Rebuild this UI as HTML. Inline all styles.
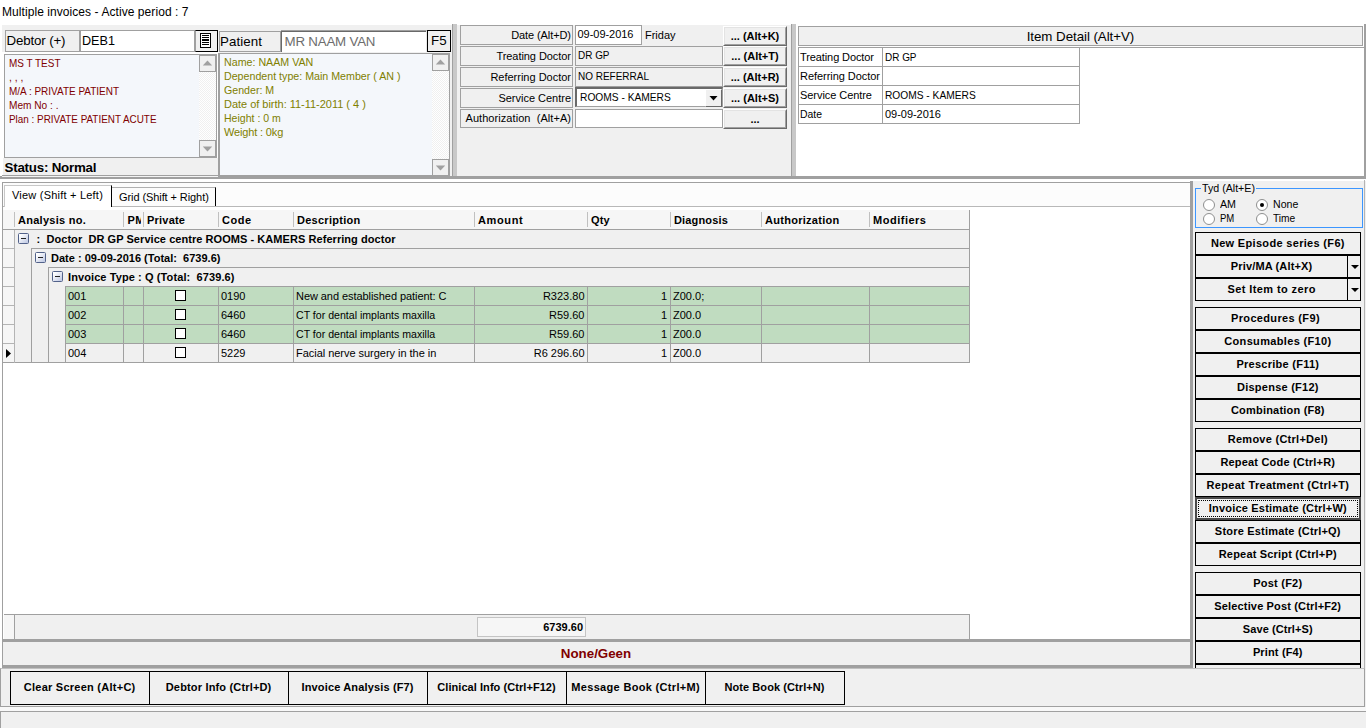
<!DOCTYPE html>
<html><head><meta charset="utf-8"><title>Multiple invoices</title><style>
html,body{margin:0;padding:0}
body{width:1366px;height:728px;position:relative;overflow:hidden;background:#fff;font-family:"Liberation Sans",Arial,sans-serif;font-size:11px;color:#000}
div,span.t,svg{position:absolute;box-sizing:border-box}
span.t{white-space:pre}
</style></head><body>
<div style="left:0px;top:25px;width:1366px;height:703px;background:#f0f0f0;"></div>
<div style="left:0px;top:25px;width:2px;height:154px;background:#fff;"></div>
<span id="t0" class="t" style="top:5px;line-height:14px;font-size:12px;color:#000;letter-spacing:0.067px;left:2px;">Multiple invoices - Active period : 7</span>
<div style="left:2px;top:52px;width:217px;height:126px;background:#fff;"></div>
<div style="left:217px;top:52px;width:2px;height:127px;background:#fff;"></div>
<div style="left:5px;top:30px;width:75px;height:22px;background:#f0f0f0;border:1px solid #a0a0a0;"></div>
<span id="t1" class="t" style="top:33px;line-height:15px;font-size:13.33px;color:#000;letter-spacing:-0.153px;left:6.5px;">Debtor (+)</span>
<div style="left:80px;top:30px;width:115px;height:22px;background:#fff;border:1px solid #a0a0a0;"></div>
<span id="t2" class="t" style="top:33px;line-height:15px;font-size:13.33px;color:#000;transform:scaleX(0.9475);transform-origin:left center;left:82px;">DEB1</span>
<div style="left:195px;top:30px;width:23px;height:22px;background:#f0f0f0;border:1px solid #000;border-left-color:#a0a0a0;"></div>
<div style="left:200px;top:33px;width:11px;height:15px;background:#fff;border:1px solid #000;"><div style="left:1px;top:1px;width:7px;height:1px;background:#000"></div><div style="left:1px;top:3px;width:7px;height:1px;background:#000"></div><div style="left:1px;top:5px;width:7px;height:2px;background:#000"></div><div style="left:1px;top:8px;width:7px;height:1px;background:#000"></div><div style="left:1px;top:10px;width:7px;height:1px;background:#000"></div></div>
<div style="left:4px;top:54px;width:213px;height:104px;background:#f4f7fb;border:1px solid #a0a0a0;"></div>
<span id="t3" class="t" style="top:57px;line-height:12px;font-size:11px;color:#800000;transform:scaleX(0.9057);transform-origin:left center;left:9px;">MS T TEST</span>
<span id="t4" class="t" style="top:71px;line-height:12px;font-size:11px;color:#800000;transform:scaleX(0.9489);transform-origin:left center;left:9px;">, , ,</span>
<span id="t5" class="t" style="top:85px;line-height:12px;font-size:11px;color:#800000;transform:scaleX(0.9058);transform-origin:left center;left:9px;">M/A : PRIVATE PATIENT</span>
<span id="t6" class="t" style="top:99px;line-height:12px;font-size:11px;color:#800000;transform:scaleX(0.9201);transform-origin:left center;left:9px;">Mem No : .</span>
<span id="t7" class="t" style="top:113px;line-height:12px;font-size:11px;color:#800000;transform:scaleX(0.8992);transform-origin:left center;left:9px;">Plan : PRIVATE PATIENT ACUTE</span>
<div style="left:199px;top:55px;width:17px;height:102px;background:repeating-conic-gradient(#fff 0 25%,#f0f0f0 0 50%) 0 0/2px 2px;"></div>
<div style="left:199px;top:55px;width:17px;height:17px;background:#f0f0f0;border:1px solid #a0a0a0;"><svg width="17" height="17" style="left:-1px;top:-1px"><polygon points="3.8,10.6 8.5,5.6 13.2,10.6" fill="#a0a0a0"/></svg></div>
<div style="left:199px;top:140px;width:17px;height:17px;background:#f0f0f0;border:1px solid #a0a0a0;"><svg width="17" height="17" style="left:-1px;top:-1px"><polygon points="3.8,6.4 13.2,6.4 8.5,11.4" fill="#a0a0a0"/></svg></div>
<div style="left:3px;top:158px;width:215px;height:17px;background:#f0f0f0;"></div>
<div style="left:2px;top:175px;width:217px;height:1px;background:#a0a0a0;"></div>
<div style="left:218px;top:158px;width:1px;height:18px;background:#a0a0a0;"></div>
<span id="t8" class="t" style="top:160px;line-height:15px;font-size:13.33px;color:#000;font-weight:bold;letter-spacing:-0.215px;left:4.5px;">Status: Normal</span>
<div style="left:219px;top:31px;width:62px;height:21px;background:#f0f0f0;border:1px solid #a0a0a0;"></div>
<span id="t9" class="t" style="top:34px;line-height:15px;font-size:13.33px;color:#000;letter-spacing:0.083px;left:220px;">Patient</span>
<div style="left:281px;top:30px;width:146px;height:22px;background:#fff;border-top:1px solid #a0a0a0;border-right:1px solid #e8e8e8;"><div style="left:0;top:0;right:0;bottom:0;border-top:1px solid #696969;border-left:1px solid #696969"></div></div>
<span id="t10" class="t" style="top:34px;line-height:15px;font-size:13.33px;color:#6d6d6d;letter-spacing:-0.206px;left:284.5px;">MR NAAM VAN</span>
<div style="left:427px;top:30px;width:24px;height:22px;background:#f0f0f0;border:1px solid #000;"></div>
<span id="t11" class="t" style="top:33px;line-height:15px;font-size:13.33px;color:#000;left:431px;">F5</span>
<div style="left:218px;top:53px;width:232px;height:123px;background:#f4f7fb;border:1px solid #a0a0a0;border-left-width:2px;"></div>
<span id="t12" class="t" style="top:56px;line-height:12px;font-size:11px;color:#808000;transform:scaleX(0.9697);transform-origin:left center;left:224px;">Name: NAAM VAN</span>
<span id="t13" class="t" style="top:70px;line-height:12px;font-size:11px;color:#808000;transform:scaleX(0.9687);transform-origin:left center;left:224px;">Dependent type: Main Member ( AN )</span>
<span id="t14" class="t" style="top:84px;line-height:12px;font-size:11px;color:#808000;transform:scaleX(0.9660);transform-origin:left center;left:224px;">Gender: M</span>
<span id="t15" class="t" style="top:98px;line-height:12px;font-size:11px;color:#808000;letter-spacing:-0.022px;left:224px;">Date of birth: 11-11-2011 ( 4 )</span>
<span id="t16" class="t" style="top:112px;line-height:12px;font-size:11px;color:#808000;transform:scaleX(0.9576);transform-origin:left center;left:224px;">Height : 0 m</span>
<span id="t17" class="t" style="top:126px;line-height:12px;font-size:11px;color:#808000;letter-spacing:-0.150px;left:224px;">Weight : 0kg</span>
<div style="left:432px;top:54px;width:17px;height:122px;background:repeating-conic-gradient(#fff 0 25%,#f0f0f0 0 50%) 0 0/2px 2px;"></div>
<div style="left:432px;top:54px;width:17px;height:17px;background:#f0f0f0;border:1px solid #a0a0a0;"><svg width="17" height="17" style="left:-1px;top:-1px"><polygon points="3.8,10.6 8.5,5.6 13.2,10.6" fill="#a0a0a0"/></svg></div>
<div style="left:432px;top:159px;width:17px;height:17px;background:#f0f0f0;border:1px solid #a0a0a0;"><svg width="17" height="17" style="left:-1px;top:-1px"><polygon points="3.8,6.4 13.2,6.4 8.5,11.4" fill="#a0a0a0"/></svg></div>
<div style="left:452px;top:24px;width:1px;height:154px;background:#a0a0a0;"></div>
<div style="left:453px;top:24px;width:4px;height:154px;background:#c8c8c8;"></div>
<div style="left:791px;top:24px;width:1px;height:154px;background:#a0a0a0;"></div>
<div style="left:792px;top:24px;width:4px;height:154px;background:#c8c8c8;"></div>
<div style="left:460px;top:25px;width:113px;height:20px;background:#f0f0f0;border:1px solid #a0a0a0;"></div>
<span id="t18" class="t" style="top:29px;line-height:12px;font-size:11px;color:#000;letter-spacing:-0.093px;right:795.09px;">Date (Alt+D)</span>
<div style="left:723px;top:26px;width:64px;height:20px;background:#f0f0f0;border-top:1px solid #fff;border-left:1px solid #fff;border-right:1px solid #696969;border-bottom:1px solid #696969;"><div style="left:0;top:0;right:0;bottom:0;border-right:1px solid #a0a0a0;border-bottom:1px solid #a0a0a0;border-top:1px solid #e3e3e3;border-left:1px solid #e3e3e3"></div></div>
<span id="t19" class="t" style="top:30px;line-height:12px;font-size:11px;color:#000;font-weight:bold;left:455.00px;width:600px;text-align:center;">... (Alt+K)</span>
<div style="left:460px;top:46px;width:113px;height:20px;background:#f0f0f0;border:1px solid #a0a0a0;"></div>
<span id="t20" class="t" style="top:50px;line-height:12px;font-size:11px;color:#000;letter-spacing:-0.058px;right:795.06px;">Treating Doctor</span>
<div style="left:723px;top:46px;width:64px;height:20px;background:#f0f0f0;border-top:1px solid #fff;border-left:1px solid #fff;border-right:1px solid #696969;border-bottom:1px solid #696969;"><div style="left:0;top:0;right:0;bottom:0;border-right:1px solid #a0a0a0;border-bottom:1px solid #a0a0a0;border-top:1px solid #e3e3e3;border-left:1px solid #e3e3e3"></div></div>
<span id="t21" class="t" style="top:50px;line-height:12px;font-size:11px;color:#000;font-weight:bold;left:455.00px;width:600px;text-align:center;">... (Alt+T)</span>
<div style="left:460px;top:67px;width:113px;height:20px;background:#f0f0f0;border:1px solid #a0a0a0;"></div>
<span id="t22" class="t" style="top:71px;line-height:12px;font-size:11px;color:#000;letter-spacing:-0.007px;right:795.01px;">Referring Doctor</span>
<div style="left:723px;top:67px;width:64px;height:20px;background:#f0f0f0;border-top:1px solid #fff;border-left:1px solid #fff;border-right:1px solid #696969;border-bottom:1px solid #696969;"><div style="left:0;top:0;right:0;bottom:0;border-right:1px solid #a0a0a0;border-bottom:1px solid #a0a0a0;border-top:1px solid #e3e3e3;border-left:1px solid #e3e3e3"></div></div>
<span id="t23" class="t" style="top:71px;line-height:12px;font-size:11px;color:#000;font-weight:bold;left:455.00px;width:600px;text-align:center;">... (Alt+R)</span>
<div style="left:460px;top:88px;width:113px;height:20px;background:#f0f0f0;border:1px solid #a0a0a0;"></div>
<span id="t24" class="t" style="top:92px;line-height:12px;font-size:11px;color:#000;letter-spacing:-0.013px;right:795.01px;">Service Centre</span>
<div style="left:723px;top:88px;width:64px;height:20px;background:#f0f0f0;border-top:1px solid #fff;border-left:1px solid #fff;border-right:1px solid #696969;border-bottom:1px solid #696969;"><div style="left:0;top:0;right:0;bottom:0;border-right:1px solid #a0a0a0;border-bottom:1px solid #a0a0a0;border-top:1px solid #e3e3e3;border-left:1px solid #e3e3e3"></div></div>
<span id="t25" class="t" style="top:92px;line-height:12px;font-size:11px;color:#000;font-weight:bold;left:455.00px;width:600px;text-align:center;">... (Alt+S)</span>
<div style="left:460px;top:109px;width:113px;height:19px;background:#f0f0f0;border:1px solid #a0a0a0;"></div>
<span id="t26" class="t" style="top:112px;line-height:12px;font-size:11px;color:#000;letter-spacing:0.060px;right:794.94px;">Authorization  (Alt+A)</span>
<div style="left:723px;top:109px;width:64px;height:20px;background:#f0f0f0;border-top:1px solid #fff;border-left:1px solid #fff;border-right:1px solid #696969;border-bottom:1px solid #696969;"><div style="left:0;top:0;right:0;bottom:0;border-right:1px solid #a0a0a0;border-bottom:1px solid #a0a0a0;border-top:1px solid #e3e3e3;border-left:1px solid #e3e3e3"></div></div>
<span id="t27" class="t" style="top:113px;line-height:12px;font-size:11px;color:#000;font-weight:bold;left:455.00px;width:600px;text-align:center;">...</span>
<div style="left:575px;top:25px;width:67px;height:20px;background:#fff;border:1px solid #a0a0a0;"></div>
<span id="t28" class="t" style="top:28px;line-height:12px;font-size:11px;color:#000;letter-spacing:-0.031px;left:577.5px;">09-09-2016</span>
<span id="t29" class="t" style="top:29px;line-height:12px;font-size:11px;color:#000;letter-spacing:-0.013px;left:645px;">Friday</span>
<div style="left:575px;top:46px;width:148px;height:20px;background:#f0f0f0;border:1px solid #a0a0a0;"></div>
<span id="t30" class="t" style="top:49px;line-height:12px;font-size:11px;color:#000;transform:scaleX(0.9040);transform-origin:left center;left:577.5px;">DR GP</span>
<div style="left:575px;top:67px;width:148px;height:20px;background:#f0f0f0;border:1px solid #a0a0a0;"></div>
<span id="t31" class="t" style="top:70px;line-height:12px;font-size:11px;color:#000;transform:scaleX(0.9073);transform-origin:left center;left:577.5px;">NO REFERRAL</span>
<div style="left:575px;top:87px;width:148px;height:20px;background:#fff;border:1px solid #a0a0a0;border-left:2px solid #696969;border-top:2px solid #696969;"></div>
<span id="t32" class="t" style="top:91px;line-height:12px;font-size:11px;color:#000;transform:scaleX(0.9285);transform-origin:left center;left:579.5px;">ROOMS - KAMERS</span>
<div style="left:705px;top:89px;width:17px;height:18px;background:#f0f0f0;border-top:1px solid #fff;border-left:1px solid #fff;border-right:1px solid #696969;border-bottom:1px solid #696969;"><svg width="17" height="18" style="left:-1px;top:-1px"><polygon points="4.5,7 12.5,7 8.5,11.5" fill="#000"/></svg></div>
<div style="left:575px;top:109px;width:148px;height:19px;background:#fff;border:1px solid #a0a0a0;"></div>
<div style="left:796px;top:25px;width:570px;height:151px;background:#fff;"></div>
<div style="left:798px;top:26px;width:565px;height:20px;background:#f0f0f0;border:1px solid #a0a0a0;"></div>
<div style="left:798px;top:47px;width:566px;height:1px;background:#a0a0a0;"></div>
<div style="left:1364px;top:24px;width:2px;height:155px;background:#a0a0a0;"></div>
<span id="t33" class="t" style="top:29px;line-height:15px;font-size:13.33px;color:#000;letter-spacing:-0.051px;left:780.47px;width:600px;text-align:center;">Item Detail (Alt+V)</span>
<div style="left:798px;top:47px;width:282px;height:77px;background:#fff;border:1px solid #a0a0a0;"></div>
<div style="left:882px;top:47px;width:1px;height:77px;background:#a0a0a0;"></div>
<span id="t34" class="t" style="top:51px;line-height:12px;font-size:11px;color:#000;letter-spacing:-0.100px;left:800px;">Treating Doctor</span>
<span id="t35" class="t" style="top:51px;line-height:12px;font-size:11px;color:#000;transform:scaleX(0.9040);transform-origin:left center;left:885px;">DR GP</span>
<div style="left:798px;top:66px;width:282px;height:1px;background:#a0a0a0;"></div>
<span id="t36" class="t" style="top:70px;line-height:12px;font-size:11px;color:#000;letter-spacing:-0.047px;left:800px;">Referring Doctor</span>
<div style="left:798px;top:85px;width:282px;height:1px;background:#a0a0a0;"></div>
<span id="t37" class="t" style="top:89px;line-height:12px;font-size:11px;color:#000;letter-spacing:-0.059px;left:800px;">Service Centre</span>
<span id="t38" class="t" style="top:89px;line-height:12px;font-size:11px;color:#000;transform:scaleX(0.9274);transform-origin:left center;left:885px;">ROOMS - KAMERS</span>
<div style="left:798px;top:104px;width:282px;height:1px;background:#a0a0a0;"></div>
<span id="t39" class="t" style="top:108px;line-height:12px;font-size:11px;color:#000;transform:scaleX(0.9462);transform-origin:left center;left:800px;">Date</span>
<span id="t40" class="t" style="top:108px;line-height:12px;font-size:11px;color:#000;letter-spacing:-0.031px;left:885px;">09-09-2016</span>
<div style="left:0px;top:176px;width:1364px;height:3px;background:#a0a0a0;"></div>
<div style="left:2px;top:176px;width:216px;height:1px;background:#f4f4f4;"></div>
<div style="left:0px;top:179px;width:1366px;height:3px;background:#fff;"></div>
<div style="left:2px;top:182px;width:1189px;height:457px;background:#fff;border-left:1px solid #a0a0a0;border-top:1px solid #a0a0a0;border-right:1px solid #a0a0a0;"></div>
<div style="left:3px;top:183px;width:1187px;height:23px;background:#fcfcfc;"></div>
<div style="left:3px;top:206px;width:1187px;height:1px;background:#b8b8b8;"></div>
<div style="left:4px;top:185px;width:108px;height:22px;background:#fff;border-right:1px solid #000;border-left:1px solid #c8c8c8;border-top:1px solid #c8c8c8;"></div>
<span id="t41" class="t" style="top:189px;line-height:12px;font-size:11px;color:#000;letter-spacing:0.215px;left:12px;">View (Shift + Left)</span>
<div style="left:112px;top:187px;width:104px;height:19px;background:#fcfcfc;border-right:1px solid #000;border-top:1px solid #b0b0b0;"></div>
<span id="t42" class="t" style="top:191px;line-height:12px;font-size:11px;color:#000;letter-spacing:-0.084px;left:119px;">Grid (Shift + Right)</span>
<div style="left:3px;top:210px;width:967px;height:19px;background:#f6f6f6;"></div>
<div style="left:14px;top:212px;width:1px;height:15px;background:#c0c0c0;"></div>
<span id="t43" class="t" style="top:214px;line-height:12px;font-size:11px;color:#000;font-weight:bold;letter-spacing:0.264px;left:18px;">Analysis no.</span>
<div style="left:123px;top:212px;width:1px;height:15px;background:#c0c0c0;"></div>
<div style="left:124px;top:212px;width:17px;height:16px;overflow:hidden;"><span class="t" style="left:3.5px;top:2px;line-height:12px;font-size:11px;font-weight:bold;letter-spacing:0.3px">PM</span></div>
<div style="left:143px;top:212px;width:1px;height:15px;background:#c0c0c0;"></div>
<span id="t44" class="t" style="top:214px;line-height:12px;font-size:11px;color:#000;font-weight:bold;letter-spacing:0.216px;left:147px;">Private</span>
<div style="left:218px;top:212px;width:1px;height:15px;background:#c0c0c0;"></div>
<span id="t45" class="t" style="top:214px;line-height:12px;font-size:11px;color:#000;font-weight:bold;letter-spacing:0.500px;left:222px;">Code</span>
<div style="left:293px;top:212px;width:1px;height:15px;background:#c0c0c0;"></div>
<span id="t46" class="t" style="top:214px;line-height:12px;font-size:11px;color:#000;font-weight:bold;letter-spacing:0.268px;left:297px;">Description</span>
<div style="left:474px;top:212px;width:1px;height:15px;background:#c0c0c0;"></div>
<span id="t47" class="t" style="top:214px;line-height:12px;font-size:11px;color:#000;font-weight:bold;letter-spacing:0.631px;left:478px;">Amount</span>
<div style="left:587px;top:212px;width:1px;height:15px;background:#c0c0c0;"></div>
<span id="t48" class="t" style="top:214px;line-height:12px;font-size:11px;color:#000;font-weight:bold;letter-spacing:0.078px;left:591px;">Qty</span>
<div style="left:670px;top:212px;width:1px;height:15px;background:#c0c0c0;"></div>
<span id="t49" class="t" style="top:214px;line-height:12px;font-size:11px;color:#000;font-weight:bold;letter-spacing:0.153px;left:674px;">Diagnosis</span>
<div style="left:761px;top:212px;width:1px;height:15px;background:#c0c0c0;"></div>
<span id="t50" class="t" style="top:214px;line-height:12px;font-size:11px;color:#000;font-weight:bold;letter-spacing:0.284px;left:765px;">Authorization</span>
<div style="left:869px;top:212px;width:1px;height:15px;background:#c0c0c0;"></div>
<span id="t51" class="t" style="top:214px;line-height:12px;font-size:11px;color:#000;font-weight:bold;letter-spacing:0.512px;left:873px;">Modifiers</span>
<div style="left:3px;top:230px;width:967px;height:133px;background:#f0f0f0;"></div>
<div style="left:3px;top:230px;width:11px;height:132px;background:#f6f6f6;"></div>
<div style="left:3px;top:229px;width:967px;height:1px;background:#a0a0a0;"></div>
<div style="left:3px;top:229px;width:11px;height:1px;background:#a0a0a0;"></div>
<div style="left:31px;top:248px;width:939px;height:1px;background:#a0a0a0;"></div>
<div style="left:3px;top:248px;width:11px;height:1px;background:#b4b4b4;"></div>
<div style="left:48px;top:267px;width:922px;height:1px;background:#a0a0a0;"></div>
<div style="left:3px;top:267px;width:11px;height:1px;background:#b4b4b4;"></div>
<div style="left:65px;top:286px;width:905px;height:1px;background:#a0a0a0;"></div>
<div style="left:3px;top:286px;width:11px;height:1px;background:#b4b4b4;"></div>
<div style="left:65px;top:305px;width:905px;height:1px;background:#a0a0a0;"></div>
<div style="left:3px;top:305px;width:11px;height:1px;background:#b4b4b4;"></div>
<div style="left:65px;top:324px;width:905px;height:1px;background:#a0a0a0;"></div>
<div style="left:3px;top:324px;width:11px;height:1px;background:#b4b4b4;"></div>
<div style="left:65px;top:343px;width:905px;height:1px;background:#a0a0a0;"></div>
<div style="left:3px;top:343px;width:11px;height:1px;background:#b4b4b4;"></div>
<div style="left:3px;top:362px;width:967px;height:1px;background:#a0a0a0;"></div>
<div style="left:3px;top:362px;width:11px;height:1px;background:#a0a0a0;"></div>
<div style="left:969px;top:210px;width:1px;height:153px;background:#a0a0a0;"></div>
<div style="left:14px;top:230px;width:1px;height:133px;background:#b4b4b4;"></div>
<div style="left:31px;top:248px;width:1px;height:114px;background:#a0a0a0;"></div>
<div style="left:48px;top:267px;width:1px;height:95px;background:#a0a0a0;"></div>
<div style="left:65px;top:286px;width:1px;height:76px;background:#a0a0a0;"></div>
<div style="left:66px;top:287px;width:903px;height:18px;background:#c0dcc0;"></div>
<div style="left:66px;top:306px;width:903px;height:18px;background:#c0dcc0;"></div>
<div style="left:66px;top:325px;width:903px;height:18px;background:#c0dcc0;"></div>
<div style="left:18px;top:233px;width:11px;height:11px;background:linear-gradient(135deg,#fff 15%,#bcc6e2 100%);border:1px solid #52628a;border-radius:1.5px;"><div style="left:2px;top:4px;width:5px;height:1px;background:#222"></div></div>
<div style="left:35px;top:252px;width:11px;height:11px;background:linear-gradient(135deg,#fff 15%,#bcc6e2 100%);border:1px solid #52628a;border-radius:1.5px;"><div style="left:2px;top:4px;width:5px;height:1px;background:#222"></div></div>
<div style="left:52px;top:271px;width:11px;height:11px;background:linear-gradient(135deg,#fff 15%,#bcc6e2 100%);border:1px solid #52628a;border-radius:1.5px;"><div style="left:2px;top:4px;width:5px;height:1px;background:#222"></div></div>
<span id="t52" class="t" style="top:233px;line-height:12px;font-size:11px;color:#000;font-weight:bold;letter-spacing:0.056px;left:36.5px;">:  Doctor  DR GP Service centre ROOMS - KAMERS Referring doctor</span>
<span id="t53" class="t" style="top:252px;line-height:12px;font-size:11px;color:#000;font-weight:bold;letter-spacing:0.010px;left:51px;">Date : 09-09-2016 (Total:  6739.6)</span>
<span id="t54" class="t" style="top:271px;line-height:12px;font-size:11px;color:#000;font-weight:bold;letter-spacing:0.096px;left:68px;">Invoice Type : Q (Total:  6739.6)</span>
<div style="left:123px;top:286px;width:1px;height:19px;background:#a0a0a0;"></div>
<div style="left:143px;top:286px;width:1px;height:19px;background:#a0a0a0;"></div>
<div style="left:218px;top:286px;width:1px;height:19px;background:#a0a0a0;"></div>
<div style="left:293px;top:286px;width:1px;height:19px;background:#a0a0a0;"></div>
<div style="left:474px;top:286px;width:1px;height:19px;background:#a0a0a0;"></div>
<div style="left:587px;top:286px;width:1px;height:19px;background:#a0a0a0;"></div>
<div style="left:670px;top:286px;width:1px;height:19px;background:#a0a0a0;"></div>
<div style="left:761px;top:286px;width:1px;height:19px;background:#a0a0a0;"></div>
<div style="left:869px;top:286px;width:1px;height:19px;background:#a0a0a0;"></div>
<span id="t55" class="t" style="top:290px;line-height:12px;font-size:11px;color:#000;left:68px;">001</span>
<span id="t56" class="t" style="top:290px;line-height:12px;font-size:11px;color:#000;left:221px;">0190</span>
<span id="t57" class="t" style="top:290px;line-height:12px;font-size:11px;color:#000;letter-spacing:-0.061px;left:296px;">New and established patient: C</span>
<span id="t58" class="t" style="top:290px;line-height:12px;font-size:11px;color:#000;right:781.50px;">R323.80</span>
<span id="t59" class="t" style="top:290px;line-height:12px;font-size:11px;color:#000;right:699.00px;">1</span>
<span id="t60" class="t" style="top:290px;line-height:12px;font-size:11px;color:#000;left:673px;">Z00.0;</span>
<div style="left:175px;top:290px;width:11px;height:11px;background:#fff;border:1px solid #000;"></div>
<div style="left:123px;top:305px;width:1px;height:19px;background:#a0a0a0;"></div>
<div style="left:143px;top:305px;width:1px;height:19px;background:#a0a0a0;"></div>
<div style="left:218px;top:305px;width:1px;height:19px;background:#a0a0a0;"></div>
<div style="left:293px;top:305px;width:1px;height:19px;background:#a0a0a0;"></div>
<div style="left:474px;top:305px;width:1px;height:19px;background:#a0a0a0;"></div>
<div style="left:587px;top:305px;width:1px;height:19px;background:#a0a0a0;"></div>
<div style="left:670px;top:305px;width:1px;height:19px;background:#a0a0a0;"></div>
<div style="left:761px;top:305px;width:1px;height:19px;background:#a0a0a0;"></div>
<div style="left:869px;top:305px;width:1px;height:19px;background:#a0a0a0;"></div>
<span id="t61" class="t" style="top:309px;line-height:12px;font-size:11px;color:#000;left:68px;">002</span>
<span id="t62" class="t" style="top:309px;line-height:12px;font-size:11px;color:#000;left:221px;">6460</span>
<span id="t63" class="t" style="top:309px;line-height:12px;font-size:11px;color:#000;transform:scaleX(0.9621);transform-origin:left center;left:296px;">CT for dental implants maxilla</span>
<span id="t64" class="t" style="top:309px;line-height:12px;font-size:11px;color:#000;right:781.50px;">R59.60</span>
<span id="t65" class="t" style="top:309px;line-height:12px;font-size:11px;color:#000;right:699.00px;">1</span>
<span id="t66" class="t" style="top:309px;line-height:12px;font-size:11px;color:#000;left:673px;">Z00.0</span>
<div style="left:175px;top:309px;width:11px;height:11px;background:#fff;border:1px solid #000;"></div>
<div style="left:123px;top:324px;width:1px;height:19px;background:#a0a0a0;"></div>
<div style="left:143px;top:324px;width:1px;height:19px;background:#a0a0a0;"></div>
<div style="left:218px;top:324px;width:1px;height:19px;background:#a0a0a0;"></div>
<div style="left:293px;top:324px;width:1px;height:19px;background:#a0a0a0;"></div>
<div style="left:474px;top:324px;width:1px;height:19px;background:#a0a0a0;"></div>
<div style="left:587px;top:324px;width:1px;height:19px;background:#a0a0a0;"></div>
<div style="left:670px;top:324px;width:1px;height:19px;background:#a0a0a0;"></div>
<div style="left:761px;top:324px;width:1px;height:19px;background:#a0a0a0;"></div>
<div style="left:869px;top:324px;width:1px;height:19px;background:#a0a0a0;"></div>
<span id="t67" class="t" style="top:328px;line-height:12px;font-size:11px;color:#000;left:68px;">003</span>
<span id="t68" class="t" style="top:328px;line-height:12px;font-size:11px;color:#000;left:221px;">6460</span>
<span id="t69" class="t" style="top:328px;line-height:12px;font-size:11px;color:#000;transform:scaleX(0.9621);transform-origin:left center;left:296px;">CT for dental implants maxilla</span>
<span id="t70" class="t" style="top:328px;line-height:12px;font-size:11px;color:#000;right:781.50px;">R59.60</span>
<span id="t71" class="t" style="top:328px;line-height:12px;font-size:11px;color:#000;right:699.00px;">1</span>
<span id="t72" class="t" style="top:328px;line-height:12px;font-size:11px;color:#000;left:673px;">Z00.0</span>
<div style="left:175px;top:328px;width:11px;height:11px;background:#fff;border:1px solid #000;"></div>
<div style="left:123px;top:343px;width:1px;height:19px;background:#a0a0a0;"></div>
<div style="left:143px;top:343px;width:1px;height:19px;background:#a0a0a0;"></div>
<div style="left:218px;top:343px;width:1px;height:19px;background:#a0a0a0;"></div>
<div style="left:293px;top:343px;width:1px;height:19px;background:#a0a0a0;"></div>
<div style="left:474px;top:343px;width:1px;height:19px;background:#a0a0a0;"></div>
<div style="left:587px;top:343px;width:1px;height:19px;background:#a0a0a0;"></div>
<div style="left:670px;top:343px;width:1px;height:19px;background:#a0a0a0;"></div>
<div style="left:761px;top:343px;width:1px;height:19px;background:#a0a0a0;"></div>
<div style="left:869px;top:343px;width:1px;height:19px;background:#a0a0a0;"></div>
<span id="t73" class="t" style="top:347px;line-height:12px;font-size:11px;color:#000;left:68px;">004</span>
<span id="t74" class="t" style="top:347px;line-height:12px;font-size:11px;color:#000;left:221px;">5229</span>
<span id="t75" class="t" style="top:347px;line-height:12px;font-size:11px;color:#000;letter-spacing:-0.032px;left:296px;">Facial nerve surgery in the in</span>
<span id="t76" class="t" style="top:347px;line-height:12px;font-size:11px;color:#000;right:781.50px;">R6 296.60</span>
<span id="t77" class="t" style="top:347px;line-height:12px;font-size:11px;color:#000;right:699.00px;">1</span>
<span id="t78" class="t" style="top:347px;line-height:12px;font-size:11px;color:#000;left:673px;">Z00.0</span>
<div style="left:175px;top:347px;width:11px;height:11px;background:#fff;border:1px solid #000;"></div>
<svg width="6" height="9" style="left:6px;top:349px"><polygon points="0,0 5,4.5 0,9" fill="#000"/></svg>
<div style="left:4px;top:614px;width:966px;height:25px;background:#f0f0f0;border-top:1px solid #a0a0a0;border-right:1px solid #a0a0a0;"></div>
<div style="left:4px;top:615px;width:11px;height:24px;background:#f6f6f6;border-right:1px solid #a0a0a0;"></div>
<div style="left:477px;top:617px;width:109px;height:20px;background:#f6f6f6;border:1px solid #c4c4c4;"></div>
<span id="t79" class="t" style="top:621px;line-height:12px;font-size:11px;color:#000;font-weight:bold;right:783.00px;">6739.60</span>
<div style="left:0px;top:182px;width:2px;height:486px;background:#fff;"></div>
<div style="left:2px;top:639px;width:1189px;height:3px;background:#a0a0a0;"></div>
<div style="left:2px;top:642px;width:1189px;height:23px;background:#f0f0f0;"></div>
<div style="left:2px;top:642px;width:1px;height:23px;background:#a0a0a0;"></div>
<span id="t80" class="t" style="top:646px;line-height:15px;font-size:13.33px;color:#800000;font-weight:bold;left:296.00px;width:600px;text-align:center;">None/Geen</span>
<div style="left:2px;top:665px;width:1189px;height:3px;background:#a0a0a0;"></div>
<div style="left:1193px;top:181px;width:173px;height:487px;background:#f0f0f0;"></div>
<div style="left:1190px;top:181px;width:3px;height:487px;background:#a0a0a0;"></div>
<div style="left:1195px;top:188px;width:168px;height:40px;background:#f0f0f0;border:1px solid #3c96ff;"></div>
<div style="left:1201px;top:184px;width:55px;height:10px;background:#f0f0f0;"></div>
<span id="t81" class="t" style="top:182px;line-height:12px;font-size:11px;color:#000;transform:scaleX(0.9686);transform-origin:left center;left:1202px;">Tyd (Alt+E)</span>
<div style="left:1203px;top:199px;width:12px;height:12px;background:#fff;border:1px solid #8e8f8f;border-radius:6px;"></div>
<div style="left:1203px;top:213px;width:12px;height:12px;background:#fff;border:1px solid #8e8f8f;border-radius:6px;"></div>
<div style="left:1256px;top:199px;width:12px;height:12px;background:#fff;border:1px solid #8e8f8f;border-radius:6px;"><div style="left:3px;top:3px;width:4px;height:4px;border-radius:2px;background:#000"></div></div>
<div style="left:1256px;top:213px;width:12px;height:12px;background:#fff;border:1px solid #8e8f8f;border-radius:6px;"></div>
<span id="t82" class="t" style="top:198px;line-height:12px;font-size:11px;color:#000;transform:scaleX(0.9697);transform-origin:left center;left:1220px;">AM</span>
<span id="t83" class="t" style="top:212px;line-height:12px;font-size:11px;color:#000;transform:scaleX(0.8667);transform-origin:left center;left:1220px;">PM</span>
<span id="t84" class="t" style="top:198px;line-height:12px;font-size:11px;color:#000;transform:scaleX(0.9621);transform-origin:left center;left:1273px;">None</span>
<span id="t85" class="t" style="top:212px;line-height:12px;font-size:11px;color:#000;transform:scaleX(0.9274);transform-origin:left center;left:1273px;">Time</span>
<div style="left:1195px;top:232px;width:166px;height:23px;background:#f0f0f0;border:1px solid #000;"></div>
<span id="t86" class="t" style="top:237px;line-height:12px;font-size:11px;color:#000;font-weight:bold;letter-spacing:0.321px;left:977.86px;width:600px;text-align:center;">New Episode series (F6)</span>
<div style="left:1195px;top:255px;width:166px;height:23px;background:#f0f0f0;border:1px solid #000;"></div>
<div style="left:1347px;top:255px;width:1px;height:23px;background:#000;"></div>
<svg width="8" height="4" style="left:1351px;top:265px"><polygon points="0,0 8,0 4,4" fill="#000"/></svg>
<span id="t87" class="t" style="top:260px;line-height:12px;font-size:11px;color:#000;font-weight:bold;letter-spacing:0.139px;left:971.57px;width:600px;text-align:center;">Priv/MA (Alt+X)</span>
<div style="left:1195px;top:278px;width:166px;height:23px;background:#f0f0f0;border:1px solid #000;"></div>
<div style="left:1347px;top:278px;width:1px;height:23px;background:#000;"></div>
<svg width="8" height="4" style="left:1351px;top:288px"><polygon points="0,0 8,0 4,4" fill="#000"/></svg>
<span id="t88" class="t" style="top:283px;line-height:12px;font-size:11px;color:#000;font-weight:bold;letter-spacing:0.400px;left:971.70px;width:600px;text-align:center;">Set Item to zero</span>
<div style="left:1195px;top:307px;width:166px;height:23px;background:#f0f0f0;border:1px solid #000;"></div>
<span id="t89" class="t" style="top:312px;line-height:12px;font-size:11px;color:#000;font-weight:bold;letter-spacing:0.339px;left:975.47px;width:600px;text-align:center;">Procedures (F9)</span>
<div style="left:1195px;top:330px;width:166px;height:23px;background:#f0f0f0;border:1px solid #000;"></div>
<span id="t90" class="t" style="top:335px;line-height:12px;font-size:11px;color:#000;font-weight:bold;letter-spacing:0.339px;left:977.87px;width:600px;text-align:center;">Consumables (F10)</span>
<div style="left:1195px;top:353px;width:166px;height:23px;background:#f0f0f0;border:1px solid #000;"></div>
<span id="t91" class="t" style="top:358px;line-height:12px;font-size:11px;color:#000;font-weight:bold;letter-spacing:0.266px;left:977.83px;width:600px;text-align:center;">Prescribe (F11)</span>
<div style="left:1195px;top:376px;width:166px;height:23px;background:#f0f0f0;border:1px solid #000;"></div>
<span id="t92" class="t" style="top:381px;line-height:12px;font-size:11px;color:#000;font-weight:bold;letter-spacing:0.250px;left:977.83px;width:600px;text-align:center;">Dispense (F12)</span>
<div style="left:1195px;top:399px;width:166px;height:23px;background:#f0f0f0;border:1px solid #000;"></div>
<span id="t93" class="t" style="top:404px;line-height:12px;font-size:11px;color:#000;font-weight:bold;letter-spacing:0.204px;left:977.80px;width:600px;text-align:center;">Combination (F8)</span>
<div style="left:1195px;top:428px;width:166px;height:23px;background:#f0f0f0;border:1px solid #000;"></div>
<span id="t94" class="t" style="top:433px;line-height:12px;font-size:11px;color:#000;font-weight:bold;letter-spacing:0.264px;left:977.83px;width:600px;text-align:center;">Remove (Ctrl+Del)</span>
<div style="left:1195px;top:451px;width:166px;height:23px;background:#f0f0f0;border:1px solid #000;"></div>
<span id="t95" class="t" style="top:456px;line-height:12px;font-size:11px;color:#000;font-weight:bold;letter-spacing:0.193px;left:977.80px;width:600px;text-align:center;">Repeat Code (Ctrl+R)</span>
<div style="left:1195px;top:474px;width:166px;height:23px;background:#f0f0f0;border:1px solid #000;"></div>
<span id="t96" class="t" style="top:479px;line-height:12px;font-size:11px;color:#000;font-weight:bold;letter-spacing:0.317px;left:977.86px;width:600px;text-align:center;">Repeat Treatment (Ctrl+T)</span>
<div style="left:1195px;top:497px;width:166px;height:23px;background:#f0f0f0;border:2px solid #4a4a4a;"></div>
<span id="t97" class="t" style="top:502px;line-height:12px;font-size:11px;color:#000;font-weight:bold;letter-spacing:0.210px;left:977.81px;width:600px;text-align:center;">Invoice Estimate (Ctrl+W)</span>
<div style="left:1198px;top:500px;width:160px;height:17px;border:1px dotted #000;"></div>
<div style="left:1195px;top:520px;width:166px;height:23px;background:#f0f0f0;border:1px solid #000;"></div>
<span id="t98" class="t" style="top:525px;line-height:12px;font-size:11px;color:#000;font-weight:bold;letter-spacing:0.198px;left:977.80px;width:600px;text-align:center;">Store Estimate (Ctrl+Q)</span>
<div style="left:1195px;top:543px;width:166px;height:23px;background:#f0f0f0;border:1px solid #000;"></div>
<span id="t99" class="t" style="top:548px;line-height:12px;font-size:11px;color:#000;font-weight:bold;letter-spacing:0.186px;left:977.79px;width:600px;text-align:center;">Repeat Script (Ctrl+P)</span>
<div style="left:1195px;top:572px;width:166px;height:23px;background:#f0f0f0;border:1px solid #000;"></div>
<span id="t100" class="t" style="top:577px;line-height:12px;font-size:11px;color:#000;font-weight:bold;letter-spacing:0.217px;left:977.81px;width:600px;text-align:center;">Post (F2)</span>
<div style="left:1195px;top:595px;width:166px;height:23px;background:#f0f0f0;border:1px solid #000;"></div>
<span id="t101" class="t" style="top:600px;line-height:12px;font-size:11px;color:#000;font-weight:bold;letter-spacing:0.153px;left:977.78px;width:600px;text-align:center;">Selective Post (Ctrl+F2)</span>
<div style="left:1195px;top:618px;width:166px;height:23px;background:#f0f0f0;border:1px solid #000;"></div>
<span id="t102" class="t" style="top:623px;line-height:12px;font-size:11px;color:#000;font-weight:bold;letter-spacing:0.077px;left:977.74px;width:600px;text-align:center;">Save (Ctrl+S)</span>
<div style="left:1195px;top:641px;width:166px;height:23px;background:#f0f0f0;border:1px solid #000;"></div>
<span id="t103" class="t" style="top:646px;line-height:12px;font-size:11px;color:#000;font-weight:bold;letter-spacing:0.147px;left:977.77px;width:600px;text-align:center;">Print (F4)</span>
<div style="left:1195px;top:664px;width:166px;height:4px;background:#f0f0f0;border:1px solid #000;border-bottom:none;"></div>
<div style="left:1364px;top:180px;width:1px;height:488px;background:#b4b4b4;"></div>
<div style="left:0px;top:668px;width:1366px;height:60px;background:#f0f0f0;"></div>
<div style="left:0px;top:668px;width:1365px;height:39px;background:#f0f0f0;border:1px solid #a0a0a0;border-top-color:#c0c0c0;"></div>
<div style="left:0px;top:707px;width:1366px;height:4px;background:#f8f8f8;"></div>
<div style="left:10px;top:671px;width:140px;height:34px;background:#f0f0f0;border:1px solid #000;"></div>
<span id="t104" class="t" style="top:681px;line-height:12px;font-size:11px;color:#000;font-weight:bold;letter-spacing:0.253px;left:-220.37px;width:600px;text-align:center;">Clear Screen (Alt+C)</span>
<div style="left:149px;top:671px;width:140px;height:34px;background:#f0f0f0;border:1px solid #000;"></div>
<span id="t105" class="t" style="top:681px;line-height:12px;font-size:11px;color:#000;font-weight:bold;letter-spacing:0.165px;left:-81.42px;width:600px;text-align:center;">Debtor Info (Ctrl+D)</span>
<div style="left:288px;top:671px;width:140px;height:34px;background:#f0f0f0;border:1px solid #000;"></div>
<span id="t106" class="t" style="top:681px;line-height:12px;font-size:11px;color:#000;font-weight:bold;letter-spacing:0.153px;left:57.58px;width:600px;text-align:center;">Invoice Analysis (F7)</span>
<div style="left:427px;top:671px;width:140px;height:34px;background:#f0f0f0;border:1px solid #000;"></div>
<span id="t107" class="t" style="top:681px;line-height:12px;font-size:11px;color:#000;font-weight:bold;letter-spacing:0.059px;left:196.53px;width:600px;text-align:center;">Clinical Info (Ctrl+F12)</span>
<div style="left:566px;top:671px;width:140px;height:34px;background:#f0f0f0;border:1px solid #000;"></div>
<span id="t108" class="t" style="top:681px;line-height:12px;font-size:11px;color:#000;font-weight:bold;letter-spacing:0.327px;left:335.66px;width:600px;text-align:center;">Message Book (Ctrl+M)</span>
<div style="left:705px;top:671px;width:140px;height:34px;background:#f0f0f0;border:1px solid #000;"></div>
<span id="t109" class="t" style="top:681px;line-height:12px;font-size:11px;color:#000;font-weight:bold;letter-spacing:0.082px;left:474.54px;width:600px;text-align:center;">Note Book (Ctrl+N)</span>
<div style="left:0px;top:711px;width:1366px;height:1px;background:#a0a0a0;"></div>
<div style="left:0px;top:711px;width:1px;height:17px;background:#a0a0a0;"></div>
</body></html>
